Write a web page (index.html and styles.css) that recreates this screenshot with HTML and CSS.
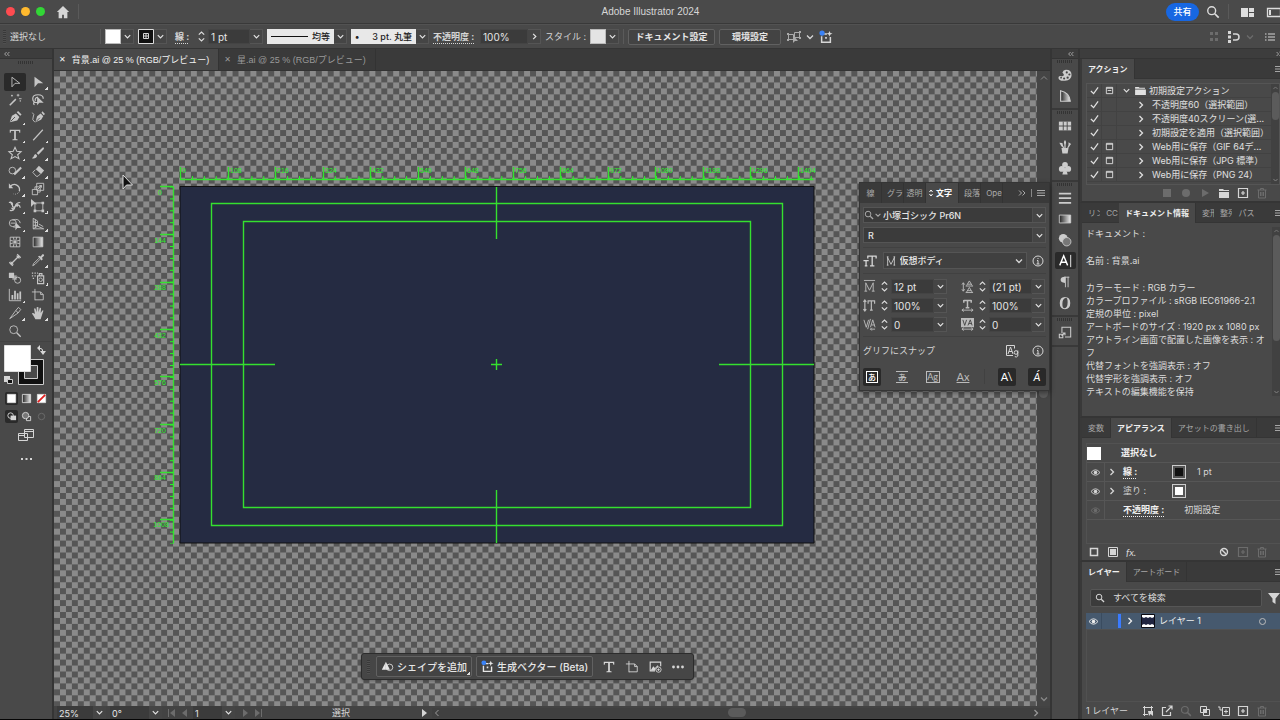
FILE: index.html
```html
<!DOCTYPE html>
<html lang="ja">
<head>
<meta charset="utf-8">
<title>Adobe Illustrator 2024</title>
<link rel="stylesheet" href="styles.css">
</head>
<body>
<svg class="sprite" aria-hidden="true">
  <symbol id="chev" viewBox="0 0 10 10"><path d="M2 3.5 5 6.5 8 3.5" stroke-width="1.3"/></symbol>
  <symbol id="right" viewBox="0 0 10 10"><path d="M3.5 2 6.5 5 3.5 8" stroke-width="1.3"/></symbol>
  <symbol id="left" viewBox="0 0 10 10"><path d="M6.5 2 3.5 5 6.5 8"/></symbol>
  <symbol id="up" viewBox="0 0 10 10"><path d="M2 6.5 5 3.5 8 6.5"/></symbol>
  <symbol id="dbl" viewBox="0 0 10 10"><path d="M4.5 2.5 2 5l2.5 2.5M8 2.5 5.5 5 8 7.5"/></symbol>
  <symbol id="dbr" viewBox="0 0 10 10"><path d="M2 2.5 4.5 5 2 7.5M5.5 2.5 8 5 5.5 7.5"/></symbol>
  <symbol id="menu" viewBox="0 0 10 10"><path d="M1 2.5h8M1 5h8M1 7.5h8"/></symbol>
  <symbol id="step" viewBox="0 0 10 14"><path d="M2 5 5 2l3 3M2 9l3 3 3-3" stroke-width="1.3"/></symbol>
  <symbol id="check" viewBox="0 0 10 10"><path d="M1 5.5 4 8.5 9 1.5" stroke-width="1.4"/></symbol>
  <symbol id="dialog" viewBox="0 0 10 10"><path d="M1.5 1.5h7v7h-7zM1.5 2.5h7"/></symbol>
  <symbol id="eye" viewBox="0 0 12 10"><path d="M1 5Q6-1 11 5 6 11 1 5z"/><circle cx="6" cy="5" r="2" class="f"/></symbol>
  <symbol id="trash" viewBox="0 0 12 12"><path d="M1.5 3h9M4.500 3V1.5h3V3M2.5 3v8h7V3M4.500 5v4M6 5v4M7.500 5v4"/></symbol>
  <symbol id="plus" viewBox="0 0 12 12"><path d="M1.5 1.5h9v9h-9zM6 4v4M4 6h4" stroke-width="1.2"/></symbol>
  <symbol id="info" viewBox="0 0 12 12"><circle cx="6" cy="6" r="5"/><path d="M5 5.5h1V9M4.500 9h3M5.500 3.5h1"/></symbol>
  <symbol id="search" viewBox="0 0 16 16"><circle cx="6.5" cy="6.5" r="4.5" stroke-width="1.6"/><path d="m10 10 4.5 4.5" stroke-width="2"/></symbol>
  <symbol id="gen" viewBox="0 0 16 16"><path d="M3 7v7h10V8M6 4.5h3" stroke-width="1.7"/><path class="f" d="M7 8h2v2H7zM12 1l1 2.5L15.500 4 13 5l-1 2.500L11 5 8.500 4 11 3.500z"/><circle cx="3.5" cy="3.5" r="3" class="blue"/></symbol>
  <symbol id="artb" viewBox="0 0 16 16"><path d="M4.500 1v13M1 4.500h5M6 4.500h5l3 3v6H4.500M11 4.500v3h3"/></symbol>
  <symbol id="bigT" viewBox="0 0 16 16"><path class="f" d="M2 2h12v3.500h-1L12.500 3.500H9v9l2 .5v1H5v-1l2-.5v-9H3.500L3 5.500H2z"/></symbol>
</svg>

<header class="titlebar">
  <div class="lights"><i class="red"></i><i class="yellow"></i><i class="green"></i></div>
  <button class="bare home" aria-label="ホーム"><svg viewBox="0 0 16 16"><path class="f" d="M8 1 1 8h2v7h4v-4h2v4h4V8h2z"/></svg></button>
  <i class="vsep"></i>
  <h1>Adobe Illustrator 2024</h1>
  <div class="title-right">
    <button class="share">共有</button>
    <button class="bare i14" aria-label="検索"><svg><use href="#search"/></svg></button>
    <i class="vsep"></i>
    <button class="bare i14" aria-label="ワークスペース"><svg viewBox="0 0 14 14"><path class="f" d="M1 3h7v9H1zM9 3h5v4H9zM9 8h5v4H9z"/></svg></button>
    <button class="bare i14 last" aria-label="パネル"><svg viewBox="0 0 14 14"><path d="M1.5 3.5h13v8h-13z" stroke-width="1.3"/><path class="f" d="M3 5h2v5H3z"/></svg></button>
  </div>
</header>

<div class="controlbar">
  <i class="grip-v"></i>
  <span class="selname">選択なし</span>
  <i class="vsep"></i>
  <span class="field"><button class="sw white" aria-label="塗り"></button><button class="dd" aria-label="塗りの一覧"><svg><use href="#chev"/></svg></button></span>
  <span class="field"><button class="sw strokesw" aria-label="線の色"><svg viewBox="0 0 16 15"><path class="well" d="M.5.5h15v14H.5z"/><path d="M5.500 4.500h5v5h-5zM8 5v4M6 7h4"/></svg></button><button class="dd" aria-label="線の一覧"><svg><use href="#chev"/></svg></button></span>
  <label class="dotted wlabel" for="sw">線 :</label>
  <span class="field"><button class="stepper" aria-label="増減"><svg><use href="#step"/></svg></button><input id="sw" class="w42" value="1 pt"><button class="dd" aria-label="線幅"><svg><use href="#chev"/></svg></button></span>
  <span class="field"><button class="preview w67"><i class="rule"></i>均等</button><button class="dd" aria-label="プロファイル"><svg><use href="#chev"/></svg></button></span>
  <span class="field"><button class="preview w65"><b>•</b>3 pt. 丸筆</button><button class="dd" aria-label="ブラシ"><svg><use href="#chev"/></svg></button></span>
  <label class="dotted bold" for="op">不透明度 :</label>
  <span class="field"><input id="op" class="w47" value="100%"><button class="dd" aria-label="不透明度"><svg><use href="#right"/></svg></button></span>
  <span class="stylelabel">スタイル :</span>
  <span class="field"><button class="sw light" aria-label="スタイル"></button><button class="dd" aria-label="スタイルの一覧"><svg><use href="#chev"/></svg></button></span>
  <i class="vsep"></i>
  <button class="btn w86">ドキュメント設定</button>
  <button class="btn w62">環境設定</button>
  <button class="bare i14 selsim" aria-label="類似を選択"><svg viewBox="0 0 14 14"><path d="M1.5 4.500h5v5h-5zM7.500 2.500h5v5h-5z"/><path class="f" d="M0 3h2v2H0zM0 9h2v2H0zM12 1h2v2h-2zM12 7h2v2h-2zM6 5v8l2-2h3z"/></svg></button>
  <button class="bare i10" aria-label="選択メニュー"><svg><use href="#chev"/></svg></button>
  <button class="bare i14" aria-label="生成"><svg><use href="#gen"/></svg></button>
  <div class="cb-right">
    <button class="bare i14 dim" aria-label="整列"><svg viewBox="0 0 14 14"><path class="f" d="M3 2h3v3H3zM8 2h3v3H8zM3 8h3v3H3zM8 8h3v3H8z"/></svg></button>
    <button class="bare i14" aria-label="スナップ"><svg viewBox="0 0 14 14"><path class="f" d="M2 1h3v3H2zM2 5.500h3v3H2zM2 10h3v3H2z"/><path d="M7 4h3q3 0 3 3t-3 3H7" stroke-width="1.5"/></svg></button>
    <button class="bare i10 dim" aria-label="スナップの一覧"><svg><use href="#chev"/></svg></button>
    <button class="bare i14 list" aria-label="一覧"><svg viewBox="0 0 14 14"><path d="M5 4h7M5 7h7M5 10h7M2 4h1.500M2 7h1.500M2 10h1.500" stroke-width="1.2"/></svg></button>
  </div>
</div>

<main class="workspace">
  <aside class="toolbox">
    <div class="strip"><svg class="i8"><use href="#dbl"/></svg></div>
    <i class="grip"></i>
    <div class="tools">
      <button class="on" aria-label="選択"><svg viewBox="0 0 16 16"><path d="M4.500 2.500v11l3.500-4h5.500z"/></svg></button>
      <button class="more" aria-label="ダイレクト選択"><svg viewBox="0 0 16 16"><path class="f" d="M4 2v12l4-4.500h6z"/></svg></button>
      <button aria-label="自動選択"><svg viewBox="0 0 16 16"><path d="m2 14 7-7" stroke-width="1.7"/><path d="M11.500 1v3M4.500 2v2M14 8v2M3.500 3h2M10 2.500h3M12.500 6.500h3"/></svg></button>
      <button aria-label="なげなわ"><svg viewBox="0 0 16 16"><path d="M8 11Q2 11 2 6.500T8 2t6 4.500M4 10q-2 2 0 3.500M5 9q-1-4 3-4" stroke-width="1.4"/><path class="f" d="M7 4v10l2.500-3h5z"/></svg></button>
      <button class="more" aria-label="ペン"><svg viewBox="0 0 16 16"><path class="f" d="M2 14 4.500 6.500 9 4l4 4-2.500 4zM10 2.500 11.500 1 15.500 5 14 6.500z"/><path class="ink" d="m3 13 5-5"/></svg></button>
      <button aria-label="曲線"><svg viewBox="0 0 16 16"><path class="f" d="M5 14 7 7l4-3 3 3-2.500 4zM12 3l1-1.500 3 3L14.500 6z"/><path class="ink" d="m6 13 4-4"/><path d="M1.500 3q3 2 1 5t2 6"/></svg></button>
      <button class="more" aria-label="文字"><svg><use href="#bigT"/></svg></button>
      <button class="more" aria-label="直線"><svg viewBox="0 0 16 16"><path d="m2.500 14 11-12" stroke-width="1.3"/></svg></button>
      <button class="more" aria-label="スター"><svg viewBox="0 0 16 16"><path d="m8 1.500 2 4.500 5 .5-4 3.500 1.500 4.500L8 12l-4.500 2.500L5 10 1 6.500 6 6z" stroke-width="1.2"/></svg></button>
      <button class="more" aria-label="ブラシ"><svg viewBox="0 0 16 16"><path class="f" d="M14 1 6.500 8l2 2L15 3zM5.500 9q-2 0-2.500 3-1 1.500-2 2 5 1 6-3z"/></svg></button>
      <button class="more" aria-label="Shaper"><svg viewBox="0 0 16 16"><circle cx="5" cy="7.5" r="3.8"/><path d="m7 12 8-8" stroke-width="2.4"/></svg></button>
      <button class="more" aria-label="消しゴム"><svg viewBox="0 0 16 16"><path class="f" d="m9 2 6 5.500-3.500 4-6-5.500z"/><path d="M5 6.500 2 9.500l4 4.500h2l3-3"/></svg></button>
      <button class="more" aria-label="回転"><svg viewBox="0 0 16 16"><path d="M2.500 5Q6 1.500 10 3.500t3 7" stroke-width="1.5"/><path d="M13 11q-3 4-7 2.500" stroke-dasharray="1 1.5"/><path class="f" d="M1 1.500V7h5z"/></svg></button>
      <button class="more" aria-label="拡大・縮小"><svg viewBox="0 0 16 16"><path d="M6.500 1.500h8v8h-8zM1.500 8.500h6v6h-6zM4.500 8V5.500h6v6H8M8 8l4-4M9.500 4H12v2.500"/></svg></button>
      <button class="more" aria-label="線幅"><svg viewBox="0 0 16 16"><path d="M1 4q4-1 4 3t4 1 5 2M2 13q5 1 6-4t6-5" stroke-width="1.4"/><path class="f" d="M2 3q3-1 4 3l-2 1zM8 7l4-2-1 4zM3 10h4l-1 3z"/></svg></button>
      <button class="more" aria-label="自由変形"><svg viewBox="0 0 16 16"><path d="M4.500 4.500h9v9h-9z"/><path class="f" d="M0 0v9l3-3h4zM12 3h3v3h-3zM3 12h3v3H3zM12 12h3v3h-3z"/></svg></button>
      <button class="more" aria-label="シェイプ形成"><svg viewBox="0 0 16 16"><circle cx="5.500" cy="7" r="4"/><path d="M5 3.500Q13 1 14 7M6 11.500h3M3 7h5"/><path class="f" d="M8.500 6v9l2-2.500H15z"/></svg></button>
      <button class="more" aria-label="遠近グリッド"><svg viewBox="0 0 16 16"><path d="M2.500 1.500v12h12M2.500 1.500l5 3v6l-5 3M5 3v9M2.500 5.500l5 1M2.500 9.500h5M7.500 10.500l7 3M9 8l5 3"/></svg></button>
      <button aria-label="メッシュ"><svg viewBox="0 0 16 16"><path d="M2.500 2.500h11v11h-11zM2.500 6q5 3 11 0M2.500 10q5-3 11 0M6 2.500q3 5 0 11M10 2.500q-3 5 0 11"/></svg></button>
      <button aria-label="グラデーション"><svg viewBox="0 0 16 16"><defs><linearGradient id="g1"><stop stop-color="#222"/><stop offset="1" stop-color="#eee"/></linearGradient></defs><path d="M2.500 2.500h11v11h-11z" fill="url(#g1)"/></svg></button>
      <button aria-label="寸法"><svg viewBox="0 0 16 16"><path d="m4 12 8-8M1.500 10.500l4 4M10.500 1.500l4 4" stroke-width="1.5"/><path class="f" d="M3 9v4h4zM9 3h4v4z"/></svg></button>
      <button class="more" aria-label="スポイト"><svg viewBox="0 0 16 16"><path d="m9 6-6 6-1 2.500L4.500 13l6-6"/><path class="f" d="m8 4 1.500-1L11 4l2-2.500q2-.5 2 1.500L12.500 5.500 13.500 7 12 8.500z"/></svg></button>
      <button aria-label="ブレンド"><svg viewBox="0 0 16 16"><path class="f" d="M1 2h6v6H1z"/><path class="f" opacity=".7" d="M5 5h5v5H5z"/><circle cx="11" cy="10.500" r="3.500"/></svg></button>
      <button class="more" aria-label="シンボルスプレー"><svg viewBox="0 0 16 16"><path d="M7.500 5.500h7v9h-7zM9.500 5V3h3v2" stroke-width="1.3"/><circle cx="11" cy="10" r="2"/><path d="M1 2.500h7M1 5.500h5M2 8.500h3" stroke-dasharray="1.5 1.5" stroke-width="1.5"/></svg></button>
      <button class="more" aria-label="グラフ"><svg viewBox="0 0 16 16"><path d="M1.500 1v13.500H15"/><path class="f" d="M4 8h2v5H4zM7 3h2v10H7zM10 6h2v7h-2zM13 4h2v9h-2z"/></svg></button>
      <button aria-label="アートボード"><svg><use href="#artb"/></svg></button>
      <button class="more" aria-label="スライス"><svg viewBox="0 0 16 16"><path d="M2 14.500 9 5l2.500 3zM9 5l3-3.500L14.500 4l-3 4"/></svg></button>
      <button class="more" aria-label="手のひら"><svg viewBox="0 0 16 16"><path class="f" d="M5 15Q3 11 1 8.500q1-1.500 3.500.5L3.500 3q1.500-1 2 1l1 3V1.500q1.500-1 2 0V7l1.500-5q1.500-.5 1.500 1L11 8l2-3q1.500-.5 1 1l-2 6-1 3z"/></svg></button>
      <button aria-label="ズーム"><svg viewBox="0 0 16 16"><circle cx="6.500" cy="6.500" r="4.500"/><path d="m10 10 4.500 4.500" stroke-width="1.5"/></svg></button>
    </div>
    <div class="colors">
      <svg viewBox="0 0 52 46"><path class="black" d="M18.500 17.500h25v25h-25z"/><path d="M24.500 23.500h13v13h-13z" class="hollow"/><path class="white-f" d="M4.500 3.500h26v26h-26z"/><path d="M39 6q4 0 4 4"/><path class="f" d="M40 3v6l-3-3zM40 9h6l-3 4z"/><path class="f" d="M4 34h6v6H4z"/><path class="black" d="M7.500 37.500h5v4h-5z"/></svg>
    </div>
    <div class="modes">
      <button class="on" aria-label="カラー"><svg viewBox="0 0 12 12"><path class="white-f" d="M1.500 1.500h9v9h-9z"/></svg></button>
      <button aria-label="グラデーション"><svg viewBox="0 0 12 12"><path d="M1.500 1.500h9v9h-9z" fill="url(#g1)"/></svg></button>
      <button aria-label="なし"><svg viewBox="0 0 12 12"><path class="white-f" d="M1.500 1.500h9v9h-9z"/><path class="redline" d="m2 10 8-8"/></svg></button>
    </div>
    <div class="modes">
      <button class="on" aria-label="標準描画"><svg viewBox="0 0 12 12"><circle cx="5" cy="5" r="3"/><path class="f" d="M5 5h6v5H5z"/></svg></button>
      <button aria-label="背面描画"><svg viewBox="0 0 12 12"><path d="M6 6h4.500v4.500H6z"/><circle cx="5" cy="5" r="3.500" class="fillgray"/></svg></button>
      <button class="dim" aria-label="内側描画"><svg viewBox="0 0 12 12"><circle cx="6" cy="6" r="3.500"/></svg></button>
    </div>
    <button class="bare screen" aria-label="スクリーンモード"><svg viewBox="0 0 18 14"><path class="pan" d="M1.500 5.500h9v7h-9zM7.500 1.500h9v8h-9zM2 7.500h5M8 3.500h8"/></svg></button>
    <button class="bare dots" aria-label="ツールバーを編集"><svg viewBox="0 0 12 4"><path class="f" d="M0 1h2v2H0zM4.500 1h2v2h-2zM9 1h2v2H9z"/></svg></button>
  </aside>

  <section class="doc">
    <nav class="doctabs">
      <button class="doctab on"><span>✕</span>背景.ai @ 25 % (RGB/プレビュー)</button>
      <button class="doctab"><span>✕</span>星.ai @ 25 % (RGB/プレビュー)</button>
    </nav>
    <div class="view">
      <svg class="art" role="img" aria-label="背景.ai">
        <defs>
          <pattern id="checker" width="11.9" height="11.9" patternUnits="userSpaceOnUse" x="6" y="5.5">
            <path class="ck-light" d="M0 0h12v12H0z"/><path class="ck-dark" d="M0 0h5.950v5.950H0zM5.950 5.950h5.950v5.950H5.950z"/>
          </pattern>
          <pattern id="tickh" width="11.9" height="4" patternUnits="userSpaceOnUse" x="126" y="105"><path class="gf" d="M0 0h1v4H0z"/></pattern>
          <pattern id="tickv" width="4" height="11.9" patternUnits="userSpaceOnUse" x="116" y="115.5"><path class="gf" d="M0 0h4v1H0z"/></pattern>
        </defs>
        <rect width="100%" height="100%" fill="url(#checker)"/>
        <g transform="translate(-54 -71)">
          <path class="board" d="M180 186.500h634V543H180z"/>
          <path class="guide" d="M211.500 203.500h571v322h-571zM243.500 221.500h507v286h-507zM496.500 187v52M496.500 490v53M180 364.500h95M719 364.500h95M491 364.500h11M496.500 359v11"/>
          <path class="guide" d="M180.500 179.500h633M173.500 187v356M180.500 179V167M228.500 179V167M275.500 179V167M323.500 179V167M370.500 179V167M418.500 179V167M465.500 179V167M513.500 179V167M560.500 179V167M608.500 179V167M655.500 179V167M703.500 179V167M750.500 179V167M798.500 179V167M160 186.500h13M160 234.500h13M160 282.500h13M160 329.500h13M160 376.500h13M160 424.500h13M160 472.500h13M160 519.500h13"/>
          <g class="rul">
            <text x="182" y="173">0</text><text x="230" y="173">108</text><text x="277" y="173">216</text><text x="325" y="173">324</text><text x="372" y="173">432</text><text x="420" y="173">540</text><text x="467" y="173">648</text><text x="515" y="173">756</text><text x="562" y="173">864</text><text x="610" y="173">972</text><text x="657" y="173">1080</text><text x="705" y="173">1188</text><text x="752" y="173">1296</text><text x="800" y="173">1404</text>
          </g>
          <g class="rul mid">
            <text x="160" y="195">0</text><text x="160" y="243">144</text><text x="160" y="290">288</text><text x="160" y="338">432</text><text x="160" y="385">576</text><text x="160" y="433">720</text><text x="160" y="480">864</text><text x="161" y="527">1008</text>
          </g>
          <path class="pointer" d="M123 175v14l3.500-4h6z"/>
        </g>
        <rect x="126" y="105" width="634" height="4" fill="url(#tickh)"/>
        <rect x="116" y="115" width="4" height="358" fill="url(#tickv)"/>
      </svg>
      <div class="vscroll"><svg class="i10"><use href="#up"/></svg><i></i><svg class="i10"><use href="#chev"/></svg></div>

      <div class="taskbar">
        <i class="grip-v"></i>
        <button class="btn task more"><svg viewBox="0 0 16 16"><path class="f" d="M6 2v10H1z"/><path class="f" d="m6 2 5 10H6z"/><circle cx="10.500" cy="9" r="4"/></svg>シェイプを追加</button>
        <button class="btn task"><svg><use href="#gen"/></svg>生成ベクター (Beta)</button>
        <button class="bare i14 first" aria-label="文字"><svg><use href="#bigT"/></svg></button>
        <button class="bare i14" aria-label="アートボード"><svg><use href="#artb"/></svg></button>
        <button class="bare i14" aria-label="画像"><svg viewBox="0 0 16 16"><path d="M14.500 7V2.500h-12v10H8" stroke-width="1.3"/><path class="f" d="M3 12 6 7l2 2 3-3 1 1-3 2-1 3z"/><circle cx="12" cy="11" r="3"/><path d="M12 9.500v3M10.500 11h3"/></svg></button>
        <button class="bare i14" aria-label="その他"><svg viewBox="0 0 14 14"><circle class="f" cx="2.500" cy="7" r="1.400"/><circle class="f" cx="7" cy="7" r="1.400"/><circle class="f" cx="11.500" cy="7" r="1.400"/></svg></button>
      </div>

      <section class="charpanel">
        <nav class="cp-tabs">
          <button class="t20 first">線</button><button class="t20 pl">グラ</button><button class="t20">透明</button><button class="on"><svg viewBox="0 0 6 10"><path d="M1.500 4 3 2l1.500 2M1.500 6 3 8l1.500-2"/></svg>文字</button><button class="t20 pl">段落</button><button class="t20 pl">Ope</button>
          <span class="cp-menu"><svg class="i10"><use href="#dbr"/></svg><i class="vsep"></i><svg class="i10"><use href="#menu"/></svg></span>
        </nav>
        <div class="cp-body">
          <div class="field wide"><span class="lead"><svg class="i10" viewBox="0 0 16 16"><use href="#search"/></svg><svg class="i8"><use href="#chev"/></svg></span><input aria-label="フォント" value="小塚ゴシック Pr6N"><button class="dd" aria-label="フォントの一覧"><svg><use href="#chev"/></svg></button></div>
          <div class="field wide"><input class="pad" aria-label="スタイル" value="R"><button class="dd" aria-label="スタイルの一覧"><svg><use href="#chev"/></svg></button></div>
          <hr>
          <div class="bodyrow"><svg class="i14" viewBox="0 0 16 16"><path d="M5 2.500h10.500M10.500 2.500V14M8 13.500h5M5.500 2v3M15 2v3M.5 7.500h6M3.500 7.500V14M2 13.500h3" stroke-width="1.5"/></svg>
            <span class="selwrap"><svg class="i10" viewBox="0 0 12 12"><path d="M2 1v10M10 1v10M2 2l4 8 4-8M1 1h2M9 1h2M1 11h2M9 11h2"/></svg><select aria-label="文字揃え"><option>仮想ボディ</option></select><svg class="i10"><use href="#chev"/></svg></span>
            <svg class="i12"><use href="#info"/></svg></div>
          <hr>
          <div class="metrics">
            <label class="field"><svg class="mi" viewBox="0 0 14 14"><path d="M1 .5h12M3 3v9M11 3v9M3 3l4 8 4-8M1.500 12h3M9.500 12h3"/></svg><span class="stepper"><svg><use href="#step"/></svg></span><input value="12 pt"><button class="dd" aria-label="サイズ"><svg><use href="#chev"/></svg></button></label>
            <label class="field"><svg class="mi" viewBox="0 0 14 14"><path d="M2.500 3v9M1 5l1.500-2L4 5M1 10l1.500 2L4 10M6 6l3-5 3 5M7 4.500h4M6 13l3-5 3 5M7 11.500h4M5 6.500h8M5 13.500h8"/></svg><span class="stepper"><svg><use href="#step"/></svg></span><input value="(21 pt)"><button class="dd" aria-label="行送り"><svg><use href="#chev"/></svg></button></label>
            <label class="field"><svg class="mi" viewBox="0 0 14 14"><path d="M2 1v12M.5 3 2 1l1.500 2M.5 11 2 13l1.500-2M5 2h8M9 2v10M7.500 12h3M5.500 1.500V5M12.500 1.500V5" stroke-width="1.3"/></svg><span class="stepper"><svg><use href="#step"/></svg></span><input value="100%"><button class="dd" aria-label="垂直比率"><svg><use href="#chev"/></svg></button></label>
            <label class="field"><svg class="mi" viewBox="0 0 14 14"><path d="M3 1.500h8M7 1.500v8M5 9.500h4M3 1v3M11 1v3" stroke-width="1.6"/><path d="M1 12h12M3 10.500 1 12l2 1.500M11 10.500l2 1.500-2 1.500"/></svg><span class="stepper"><svg><use href="#step"/></svg></span><input value="100%"><button class="dd" aria-label="水平比率"><svg><use href="#chev"/></svg></button></label>
            <label class="field"><svg class="mi" viewBox="0 0 14 14"><path d="m1 2 2.500 8L6 2M8 10l2.500-8L13 10M9 7.500h3.500M8 1 5 12M8 12h5M9.500 10.500 8 12l1.500 1.500"/></svg><span class="stepper"><svg><use href="#step"/></svg></span><input value="0"><button class="dd" aria-label="カーニング"><svg><use href="#chev"/></svg></button></label>
            <label class="field"><svg class="mi" viewBox="0 0 14 14"><path class="f" d="M0 0h14v10H0z"/><path class="ink" d="m2 2 2 6 2-6M7.500 8 10 2l2 6M8.500 6h3"/><path d="M1 12h12M3 10.500 1 12l2 1.500M11 10.500l2 1.500-2 1.500"/></svg><span class="stepper"><svg><use href="#step"/></svg></span><input value="0"><button class="dd" aria-label="トラッキング"><svg><use href="#chev"/></svg></button></label>
          </div>
          <hr>
          <div class="snap"><span>グリフにスナップ</span><svg class="i14" viewBox="0 0 14 14"><path d="M8 11.500H1.500v-10h8v3M3 10l2.500-7L8 10M4 7.500h3"/><circle cx="11" cy="8.500" r="1.800"/><path d="M12.800 6.500V12q-1 1.500-3 .7"/></svg><svg class="i12"><use href="#info"/></svg></div>
          <div class="snaps">
            <button class="on"><b>あ</b></button><button><b class="mid-line">あ</b></button><button><b class="big">Ag</b></button><button><u>Ax</u></button><i class="vsep"></i><button class="on">A\</button><button class="on"><em>Á</em></button>
          </div>
        </div>
      </section>
    </div>
    <footer class="status">
      <span class="field z"><input aria-label="ズーム" value="25%"><button class="dd" aria-label="ズームの一覧"><svg><use href="#chev"/></svg></button></span>
      <span class="field z r"><input aria-label="回転" value="0°"><button class="dd" aria-label="回転の一覧"><svg><use href="#chev"/></svg></button></span>
      <svg class="i10 dim" viewBox="0 0 10 10"><path class="f" d="M1 1h1v8H1zM8 1v8L3 5z"/></svg><svg class="i10 dim" viewBox="0 0 10 10"><path class="f" d="M7 1v8L2 5z"/></svg>
      <span class="field z n"><input aria-label="アートボード" value="1"><button class="dd" aria-label="アートボードの一覧"><svg><use href="#chev"/></svg></button></span>
      <svg class="i10 dim" viewBox="0 0 10 10"><path class="f" d="M3 1v8l5-4z"/></svg><svg class="i10 dim" viewBox="0 0 10 10"><path class="f" d="M8 1h1v8H8zM2 1v8l5-4z"/></svg>
      <span class="toolname">選択</span>
      <svg class="i10" viewBox="0 0 10 10"><path class="f" d="M3 1v8l5-4z"/></svg>
      <div class="hscroll"><svg class="i10"><use href="#left"/></svg><i></i><svg class="i10"><use href="#right"/></svg></div>
    </footer>
  </section>

  <aside class="icondock">
    <div class="strip end"><svg class="i8"><use href="#dbl"/></svg></div>
    <div class="group">
      <i class="grip"></i>
      <button aria-label="カラー"><svg viewBox="0 0 16 16"><path class="f" d="M9 2q6.500 0 6.500 6T8 14.500.5 11q0-2 2-2 3 1 4-.5T5 5q1-3 4-3z"/><g class="holes"><circle cx="10" cy="5" r="1.200"/><circle cx="13" cy="7.500" r="1.200"/><circle cx="11" cy="11" r="1.300"/><circle cx="7" cy="12" r="1.200"/><circle cx="3.500" cy="11" r="1"/></g></svg></button>
      <button aria-label="カラーガイド"><svg viewBox="0 0 16 16"><path d="M3 2q10 2 11 12H3z" fill="url(#g1)" stroke-width="1.4"/></svg></button>
    </div>
    <div class="group">
      <i class="grip"></i>
      <button aria-label="スウォッチ"><svg viewBox="0 0 16 16"><path class="f" d="M1 3h14v10H1z"/><path class="ink" d="M1 8h14M6 3v10M10.500 3v10"/></svg></button>
      <button aria-label="ブラシ"><svg viewBox="0 0 16 16"><path class="f" d="M4 9h8l-1 6.500H5zM1.500 3l3.500.5 1 4H4zM8 0q2.500 3 0 5.500-2.500-2.500 0-5.500zM12 2.500l3 2-3 3.500z"/><path d="M8 4v5M4.500 6l2 3M13 6l-2 3" stroke-width="1.4"/></svg></button>
      <button aria-label="シンボル"><svg viewBox="0 0 16 16"><circle class="f" cx="8" cy="4.500" r="3.300"/><circle class="f" cx="4.300" cy="9" r="3.300"/><circle class="f" cx="11.700" cy="9" r="3.300"/><path class="f" d="M7 8h2l2 7.500H5z"/></svg></button>
    </div>
    <div class="group">
      <i class="grip"></i>
      <button aria-label="線"><svg viewBox="0 0 16 16"><path d="M1 3h14M1 8h14M1 13.500h14" stroke-width="2"/></svg></button>
      <button aria-label="グラデーション"><svg viewBox="0 0 16 16"><path d="M1.500 3.500h13v9h-13z" fill="url(#g1)"/></svg></button>
      <button aria-label="透明"><svg viewBox="0 0 16 16"><circle class="f" cx="6" cy="6" r="5"/><circle class="fillgray" cx="10" cy="10" r="4.800"/></svg></button>
      <button class="on" aria-label="文字"><svg viewBox="0 0 16 16"><path d="m2 13 4.500-11L11 13M3.500 9.500h6" stroke-width="1.6"/><path d="M14.500 1v14"/></svg></button>
      <button aria-label="段落"><svg viewBox="0 0 16 16"><path class="f" d="M8 2Q3 2 3 5.500T8 9z"/><path d="M7 2.500h6M8.500 2v12M11.500 2v12"/></svg></button>
      <button aria-label="OpenType"><svg viewBox="0 0 16 16"><path class="f" fill-rule="evenodd" d="M8 1q6 0 6 7t-6 7-6-7 6-7zm1 1Q5 3 5 9q0 5 2.500 5Q11 13 11 7q0-5-2-5z"/></svg></button>
    </div>
    <div class="group">
      <i class="grip"></i>
      <button aria-label="アセット"><svg viewBox="0 0 16 16"><path d="M4.500 8V1.500h10v11H8M1.500 9.500h4v4h-4zM4 11l4-3M5.500 8H8v2.500" stroke-width="1.200"/></svg></button>
    </div>
    <i class="rest"></i>
  </aside>

  <aside class="panels">
    <div class="strip end"><svg class="i8"><use href="#dbr"/></svg></div>
    <section class="panel actions">
      <nav class="tabs"><button class="on">アクション</button><svg class="pmenu"><use href="#menu"/></svg></nav>
      <div class="p-body">
        <div class="act-wrap"><ul class="act">
          <li><span><svg><use href="#check"/></svg></span><span><svg viewBox="0 0 10 10"><use href="#dialog"/><path d="M3 5h4"/></svg></span><span class="tw"><svg><use href="#chev"/></svg></span><svg class="folder" viewBox="0 0 12 10"><path class="f" d="M0 1h4l1 1h6v1H0zM0 4h12v6H0z"/></svg>初期設定アクション</li>
          <li class="sub"><span><svg><use href="#check"/></svg></span><span></span><span class="tw"><svg><use href="#right"/></svg></span>不透明度60（選択範囲）</li>
          <li class="sub"><span><svg><use href="#check"/></svg></span><span></span><span class="tw"><svg><use href="#right"/></svg></span>不透明度40スクリーン(選...</li>
          <li class="sub"><span><svg><use href="#check"/></svg></span><span></span><span class="tw"><svg><use href="#right"/></svg></span>初期設定を適用（選択範囲）</li>
          <li class="sub"><span><svg><use href="#check"/></svg></span><span><svg><use href="#dialog"/></svg></span><span class="tw"><svg><use href="#right"/></svg></span>Web用に保存（GIF 64デ...</li>
          <li class="sub"><span><svg><use href="#check"/></svg></span><span><svg><use href="#dialog"/></svg></span><span class="tw"><svg><use href="#right"/></svg></span>Web用に保存（JPG 標準）</li>
          <li class="sub"><span><svg><use href="#check"/></svg></span><span><svg><use href="#dialog"/></svg></span><span class="tw"><svg><use href="#right"/></svg></span>Web用に保存（PNG 24）</li>
        </ul><div class="pscroll"><svg><use href="#up"/></svg><i></i><svg><use href="#chev"/></svg></div></div>
        <div class="foot right">
          <svg class="dim" viewBox="0 0 12 12"><path class="f" d="M2 2h8v8H2z"/></svg><svg class="dim" viewBox="0 0 12 12"><circle class="f" cx="6" cy="6" r="4"/></svg><svg class="dim" viewBox="0 0 12 12"><path class="f" d="M3 2v8l7-4z"/></svg><svg viewBox="0 0 12 12"><path class="f" d="M1 2h4l1 1h5v1H1zM1 5h10v6H1z"/></svg><svg><use href="#plus"/></svg><svg class="dim"><use href="#trash"/></svg>
        </div>
      </div>
    </section>
    <section class="panel docinfo">
      <nav class="tabs"><button class="cut">リン</button><button class="cut">CC</button><button class="on">ドキュメント情報</button><button class="cut">変形</button><button class="cut">整列</button><button class="cut wide2">パス</button><svg class="pmenu"><use href="#menu"/></svg></nav>
      <div class="p-body info-row">
        <div class="info">
          <p class="gap">ドキュメント :</p><p class="gap">名前 : 背景.ai</p>
          <p>カラーモード : RGB カラー</p><p>カラープロファイル : sRGB IEC61966-2.1</p><p>定規の単位 : pixel</p><p>アートボードのサイズ : 1920 px x 1080 px</p><p>アウトライン画面で配置した画像を表示 : オ<br>フ</p><p>代替フォントを強調表示 : オフ</p><p>代替字形を強調表示 : オフ</p><p>テキストの編集機能を保持</p>
        </div>
        <div class="pscroll tall"><svg><use href="#up"/></svg><i></i><svg><use href="#chev"/></svg></div>
      </div>
    </section>
    <section class="panel appear">
      <nav class="tabs"><button>変数</button><button class="on">アピアランス</button><button>アセットの書き出し</button><svg class="pmenu"><use href="#menu"/></svg></nav>
      <div class="p-body">
        <ul class="app">
          <li class="head"><i class="thumb"></i><b>選択なし</b></li>
          <li><span class="eye"><svg><use href="#eye"/></svg></span><svg class="i10"><use href="#right"/></svg><b class="dotted name">線 :</b><i class="chip dark"></i>1 pt</li>
          <li><span class="eye"><svg><use href="#eye"/></svg></span><svg class="i10"><use href="#right"/></svg><span class="name">塗り :</span><i class="chip"></i></li>
          <li><span class="eye dim"><svg><use href="#eye"/></svg></span><i class="i10"></i><b class="dotted">不透明度 :</b><span class="def">初期設定</span></li>
        </ul>
        <div class="foot"><svg viewBox="0 0 12 12"><path d="M2.500 2.500h7v7h-7z" stroke-width="1.5"/></svg><svg viewBox="0 0 12 12"><path d="M1.500 1.500h9v9h-9z"/><path class="f" d="M3 3h6v6H3z"/></svg><em>fx.</em><span class="push"></span><svg viewBox="0 0 12 12"><circle cx="6" cy="6" r="3.500" stroke-width="1.4"/><path d="m3.500 3.500 5 5" stroke-width="1.4"/></svg><svg class="dim"><use href="#plus"/></svg><svg class="dim"><use href="#trash"/></svg></div>
      </div>
    </section>
    <section class="panel layers">
      <nav class="tabs"><button class="on">レイヤー</button><button>アートボード</button><svg class="pmenu"><use href="#menu"/></svg></nav>
      <div class="p-body">
        <div class="lsearch"><label><svg class="i10" viewBox="0 0 16 16"><use href="#search"/></svg><input aria-label="検索" placeholder="すべてを検索"></label><svg class="i12" viewBox="0 0 12 12"><path class="f" d="M0 1h12L7.500 6.500V12l-3-2V6.500z"/></svg></div>
        <div class="lrow"><span class="eye"><svg><use href="#eye"/></svg></span><i class="bar"></i><svg class="i10"><use href="#right"/></svg><svg class="lthumb" viewBox="0 0 14 14"><path class="navy" d="M.5.5h13v13H.5z"/><path class="snow" d="M1 1h12v2l-2 1-2-1-2 1-2-1-2 1-2-1zM1 13h12v-2l-2-1-2 1-2-1-2 1-2-1-2 1z"/></svg><span>レイヤー 1</span><span class="target"></span></div>
        <div class="lempty"></div>
        <div class="foot"><span>1 レイヤー</span><span class="push"></span><svg viewBox="0 0 12 12"><path d="M2.500 1v10M9.500 1v5M1 2.500h10M1 9.500h5"/><path class="f" d="M6 6h5v5L8.500 9 7 11z"/></svg><svg viewBox="0 0 12 12"><path d="M5 2.500H1.500v8h8V7M5 7l6-6M7.500 1H11v3.500" stroke-width="1.2"/></svg><svg class="dim" viewBox="0 0 16 16"><use href="#search"/></svg><svg viewBox="0 0 12 12"><path d="M1.500 1.500h6v6h-6zM4.500 4.500h6v6h-6z"/><path class="f" d="M4 4h4v4H4z"/></svg><svg viewBox="0 0 12 12"><path d="M4.500 2.500h7v8h-7zM8 4.500v4M6 6.500h4M0 2h2v3h2"/></svg><svg><use href="#plus"/></svg><svg class="dim"><use href="#trash"/></svg></div>
      </div>
    </section>
  </aside>
</main>
</body>
</html>
```
FILE: styles.css
```css
* { box-sizing: border-box; }
html, body { height: 100%; }
body {
  margin: 0;
  display: flex;
  flex-direction: column;
  overflow: hidden;
  background: #494949;
  border-bottom: 1px solid #050505;
  color: #d6d6d6;
  font: 9px/12px Inter, "Noto Sans CJK JP", sans-serif;
}
button, input, select { font: inherit; color: inherit; margin: 0; padding: 0; border: 0; background: none; min-width: 0; }
button { white-space: nowrap; }
ul, p, h1 { margin: 0; padding: 0; list-style: none; }
hr { width: 100%; height: 1px; margin: 0; border: 0; background: #414141; }
i { font-style: normal; flex: none; }
svg { display: block; flex: none; fill: none; stroke: currentColor; overflow: visible; }
.sprite { position: absolute; width: 0; height: 0; }
.f { fill: currentColor; stroke: none; }
.ink { stroke: #444; }
.blue { fill: #3a82f6; stroke: none; }
.black { fill: #111; stroke: #ccc; }
.hollow { fill: #494949; stroke: #ccc; }
.white-f { fill: #fff; stroke: #ddd; }
.redline { stroke: #e02020; stroke-width: 2; }
.fillgray { fill: #777; }
.pan { fill: #494949; }
.navy { fill: #1f2440; stroke: #0c0c14; }
.snow { fill: #fff; stroke: none; }
.well { fill: #111; stroke: #ddd; }
.holes { fill: #444; stroke: none; }
.dim { color: #6c6c6c; }
.bare { display: flex; flex: none; }
.bare svg { width: 100%; height: 100%; }
.i8 { width: 8px; height: 8px; flex: none; }
.i10 { width: 10px; height: 10px; flex: none; }
.i12 { width: 12px; height: 12px; flex: none; }
.i14 { width: 14px; height: 14px; flex: none; }
.vsep { width: 1px; height: 15px; background: #5a5a5a; }

.titlebar {
  position: relative;
  flex: none;
  height: 24px;
  display: flex;
  align-items: center;
  padding-left: 6px;
  background: #4a4a4a;
  border-bottom: 1px solid #393939;
}
.lights { display: flex; gap: 6px; }
.lights i { width: 9px; height: 9px; border-radius: 50%; }
.red { background: #ff4b50; }
.yellow { background: #ffb92e; }
.green { background: #32d636; }
.home { width: 14px; height: 14px; margin: 0 8px 0 11px; }
.titlebar h1 { flex: 1; text-align: center; font: 400 10px/12px "Liberation Sans", sans-serif; padding-left: 78px; padding-right: 22px; }
.title-right { display: flex; align-items: center; gap: 7px; color: #ddd; overflow: hidden; }
.title-right .vsep { margin: 0 4px 0 1px; }
.share { width: 33px; height: 18px; border-radius: 9px; background: #1767e2; color: #fff; font-weight: 500; }
.last { margin-left: 5px; margin-right: 0; }

.controlbar {
  flex: none;
  height: 25px;
  display: flex;
  align-items: center;
  gap: 4px;
  padding-left: 3px;
  background: #494949;
  border-top: 1px solid #525252;
  border-bottom: 1px solid #353535;
}
.grip-v { width: 3px; height: 14px; background: repeating-linear-gradient(#393939 0 1px, #505050 1px 2px); }
.selname { width: 86px; }
.field { display: flex; flex: none; align-items: center; height: 15px; }
.field input { width: 42px; height: 15px; padding: 1px 2px 0; background: #3b3b3b; border: 1px solid #444; font-size: 10px; color: #e6e6e6; }
.dd { display: flex; align-items: center; justify-content: center; flex: none; width: 13px; height: 15px; border: 1px solid #555; border-left: 0; background: #454545; color: #e4e4e4; }
.dd svg { width: 9px; height: 9px; }
.sw { width: 16px; height: 15px; border: 1px solid #bbb; }
.white { background: #fff; }
.light { background: #e4e4e4; }
.strokesw { border: 0; }
.strokesw svg { width: 16px; height: 15px; }
.stepper { display: flex; justify-content: center; align-items: center; width: 13px; height: 15px; color: #ddd; }
.stepper svg { width: 9px; height: 13px; }
.dotted { text-decoration: underline dotted 1px; text-underline-offset: 3px; }
.wlabel { margin-left: 4px; width: 16px; font-weight: 700; }
.bold { font-weight: 700; width: 43px; white-space: nowrap; }
.stylelabel { width: 41px; white-space: nowrap; }
.field .w47 { width: 48px; }
.preview { display: flex; align-items: center; justify-content: space-between; height: 15px; padding: 0 4px; background: #e8e8e8; color: #222; font-weight: 500; }
.w67 { width: 67px; }
.w65 { width: 65px; }
.rule { width: 37px; height: 1px; background: #111; }
.btn { height: 16px; border: 1px solid #616161; border-radius: 2px; background: #434343; font-weight: 600; color: #e6e6e6; flex: none; }
.w86 { width: 87px; }
.w62 { width: 62px; }
.selsim { margin-left: 2px; color: #aaa; }
.cb-right { margin-left: auto; display: flex; align-items: center; gap: 5px; padding-right: 3px; }
.list { margin-left: 3px; }

.workspace { flex: 1; min-height: 0; display: flex; }
.strip { height: 10px; flex: none; padding-left: 3px; display: flex; align-items: center; background: #3d3d3d; border-bottom: 1px solid #343434; color: #bbb; }
.end { justify-content: flex-end; padding-right: 3px; }
.grip { display: block; width: 16px; height: 3px; margin: 2px auto; background: repeating-linear-gradient(90deg, #333 0 1px, #4a4a4a 1px 2px); }

.toolbox { flex: none; width: 54px; border-right: 2px solid #353535; background: #494949; display: flex; flex-direction: column; }
.tools { display: grid; grid-template-columns: 22px 22px; column-gap: 1px; grid-auto-rows: 1fr; height: 267px; margin-top: 7px; padding-left: 4px; color: #c6c6c6; }
.tools button { position: relative; display: flex; align-items: center; justify-content: center; }
.tools svg { width: 14px; height: 14px; }
.tools .on, .modes .on { background: #2a2a2a; border-radius: 2px; }
.more::after { content: ""; position: absolute; right: 1px; bottom: 1px; width: 3px; height: 3px; background: linear-gradient(135deg, transparent 50%, #ddd 50%); }
.colors { border-top: 1px solid #424242; margin-top: 1px; height: 48px; }
.colors svg { width: 52px; height: 46px; }
.modes { display: flex; gap: 2px; padding-left: 5px; height: 18px; align-items: center; }
.modes button { display: flex; align-items: center; justify-content: center; width: 13px; height: 13px; }
.modes svg { width: 11px; height: 11px; }
.screen { width: 18px; height: 14px; margin: 3px 0 0 17px; }
.dots { width: 12px; height: 4px; margin: 15px 0 0 21px; }

.doc { flex: 1; min-width: 0; display: flex; flex-direction: column; background: #3a3a3a; }
.doctabs { flex: none; height: 22px; display: flex; border-bottom: 1px solid #333; background: #3a3a3a; }
.doctab { display: flex; align-items: center; gap: 6px; padding: 0 9px 0 5px; border-right: 1px solid #333; color: #999; font-family: "Liberation Sans", "Noto Sans CJK JP", sans-serif; }
.doctab.on { background: #494949; color: #f2f2f2; }
.doctab span { font: 8px/12px "DejaVu Sans", sans-serif; }
.view { flex: 1; min-height: 0; position: relative; display: flex; }
.art { flex: 1; min-width: 0; height: 100%; overflow: hidden; stroke: none; }
.ck-light { fill: #8a8a8a; }
.ck-dark { fill: #565656; }
.board { fill: #252b42; stroke: #111; stroke-width: 1; }
.guide { fill: none; stroke: #35e02f; stroke-width: 1.4; }
.gf { fill: #2bf02b; }
.rul { fill: #2bf02b; font: 7px "Liberation Sans", sans-serif; }
.mid { text-anchor: middle; }
.pointer { fill: #111; stroke: #ddd; }
.vscroll { flex: none; width: 13px; display: flex; flex-direction: column; align-items: center; justify-content: space-between; padding: 2px 0; background: #454545; color: #888; }
.vscroll i { width: 9px; height: 24px; border-radius: 5px; background: #5b5b5b; margin-bottom: 6px; }

.taskbar { position: absolute; left: 307px; bottom: 26px; height: 27px; display: flex; align-items: center; gap: 9px; padding: 0 8px 0 5px; background: #464646; border: 1px solid #2c2c2c; border-radius: 3px; color: #d6d6d6; box-shadow: 0 1px 3px #2225; }
.taskbar .grip-v { margin-right: -3px; }
.task { position: relative; display: flex; align-items: center; gap: 3px; height: 21px; padding: 0 4px; font-size: 10px; font-weight: 500; margin-right: -5px; }
.task svg { width: 13px; height: 13px; }
.taskbar .first { margin-left: 5px; }

.charpanel { position: absolute; right: 0; top: 111px; width: 191px; background: #494949; border: 1px solid #353535; box-shadow: 0 2px 5px #0006; }
.cp-tabs { display: flex; height: 20px; background: #3a3a3a; color: #aaa; font-size: 8px; }
.cp-tabs button { overflow: hidden; border-right: 1px solid #333; }
.cp-tabs .on { display: flex; align-items: center; gap: 2px; padding: 0 6px 0 2px; background: #494949; color: #fff; font-weight: 700; font-size: 8px; }
.cp-tabs .on svg { width: 6px; height: 10px; }
.t20 { width: 22px; }
.t20.pl { width: 22px; padding-left: 5px; }
.cp-menu { flex: 1; display: flex; justify-content: flex-end; align-items: center; gap: 4px; padding-right: 3px; }
.cp-menu .vsep { height: 8px; background: #888; }
.cp-body { display: flex; flex-direction: column; gap: 4px; padding: 4px 3px 1px; }
.wide { background: #3b3b3b; border: 1px solid #555; height: 16px; }
.wide input { flex: 1; border: 0; height: 14px; background: none; font-size: 9px; font-weight: 500; }
.wide .dd { height: 14px; border: 0; border-left: 1px solid #4e4e4e; }
.wide .pad { padding-left: 4px; }
.lead { display: flex; align-items: center; width: 17px; color: #aaa; }
.bodyrow { display: flex; align-items: center; justify-content: space-between; height: 17px; padding-right: 2px; }
.selwrap { display: flex; align-items: center; width: 144px; height: 17px; padding: 0 2px; border: 1px solid #555; background: #404040; }
.selwrap select { flex: 1; appearance: none; font-weight: 500; padding-left: 4px; color: #e8e8e8; }
.metrics { display: grid; grid-template-columns: 85px 85px; justify-content: space-between; row-gap: 4px; padding-top: 1px; }
.metrics .mi { width: 13px; height: 13px; margin-right: 2px; color: #bbb; }
.metrics input { width: 43px; }
.snap { display: flex; align-items: center; height: 19px; gap: 13px; padding-right: 2px; }
.snap span { flex: 1; }
.snaps { display: flex; align-items: center; justify-content: space-between; height: 25px; color: #bbb; }
.snaps button { width: 18px; height: 18px; font: 11px/16px Lato, "Noto Sans CJK JP", sans-serif; border-radius: 2px; display: flex; align-items: center; justify-content: center; }
.snaps .on { background: #292929; color: #fff; }
.snaps b { font-size: 8px; line-height: 10px; font-weight: 500; border: 1px solid; width: 12px; text-align: center; }
.snaps .mid-line { border-width: 1px 0; text-decoration: line-through; }
.snaps .big { font-size: 9px; width: 14px; }
.snaps .vsep { background: #414141; }

.status { flex: none; height: 13px; display: flex; align-items: center; gap: 3px; padding-left: 3px; background: #434343; overflow: hidden; }
.status .field, .status .dd, .status .field input { height: 13px; }
.status .dd { border: 0; }
.status .field input { border: 0; font-size: 9px; }
.z input { flex: 1; }
.z { width: 49px; }
.r { width: 52px; margin-left: 1px; }
.n { width: 42px; }
.toolname { flex: none; width: 150px; text-align: center; }
.status .field + .i10 { margin-left: 2px; }
.hscroll { flex: 1; display: flex; align-items: center; justify-content: space-between; color: #999; padding-right: 9px; background: #404040; }
.hscroll i { width: 18px; height: 9px; border-radius: 5px; background: #5b5b5b; }

.icondock { flex: none; width: 30px; display: flex; flex-direction: column; border: solid #353535; border-width: 0 2px; background: #494949; }
.group { display: flex; flex-direction: column; align-items: center; padding-bottom: 2px; border-bottom: 2px solid #393939; }
.group .grip { margin: 1px auto; }
.group button { display: flex; align-items: center; justify-content: center; width: 21px; height: 17px; margin: 2px 0; color: #ccc; }
.group svg { width: 14px; height: 14px; }
.group .on { background: #2a2a2a; border-radius: 2px; color: #fff; }

.panels { flex: none; width: 200px; display: flex; flex-direction: column; background: #494949; overflow: hidden; }
.panel { flex: none; display: flex; flex-direction: column; border-left: 2px solid #393939; border-bottom: 2px solid #353535; }
.panels .strip { padding-right: 0; margin-right: -3px; }
.actions { height: 144px; }
.docinfo { height: 215px; }
.appear { height: 144px; }
.layers { flex: 1; border-bottom: 0; }
.tabs { flex: none; display: flex; height: 20px; background: #3a3a3a; border-bottom: 1px solid #353535; color: #a6a6a6; font-size: 8px; }
.tabs button { padding: 0 6px; border-right: 1px solid #343434; }
.tabs .on { background: #494949; color: #f0f0f0; font-weight: 700; height: 20px; }
.tabs .cut { width: 12px; padding: 0; overflow: hidden; margin-left: 6px; border: 0; }
.tabs .wide2 { width: 17px; }
.tabs .cut + .on { margin-left: 1px; }
.pmenu { width: 10px; height: 10px; margin: 5px -4px 0 auto; }
.p-body { flex: 1; min-height: 0; display: flex; flex-direction: column; }
.act-wrap { flex: 1; min-height: 0; display: flex; margin: 4px 0 0 4px; border: 1px solid #555; }
.act { flex: 1; min-width: 0; overflow: hidden; }
.act li { display: flex; align-items: center; height: 14px; border-bottom: 1px solid #424242; white-space: nowrap; color: #e0e0e0; }
.act span { flex: none; display: flex; width: 15px; height: 14px; align-items: center; justify-content: center; border-right: 1px solid #424242; }
.act span svg { width: 9px; height: 9px; }
.act .tw { border: 0; width: 18px; }
.act .sub .tw { width: 35px; padding-left: 18px; padding-right: 6px; }
.act .sub .tw svg { width: 10px; height: 10px; }
.folder { width: 11px; height: 9px; margin-right: 3px; }
.pscroll { flex: none; width: 8px; display: flex; flex-direction: column; align-items: center; background: #414141; color: #888; }
.pscroll svg { width: 7px; height: 8px; }
.pscroll i { width: 7px; height: 28px; border-radius: 4px; background: #5b5b5b; margin-bottom: auto; }
.tall i { height: 106px; }
.foot { flex: none; display: flex; align-items: center; gap: 7px; height: 16px; padding: 0 12px 0 6px; }
.foot svg { width: 12px; height: 12px; }
.foot em { font: italic 10px/12px Lato, sans-serif; }
.foot.right { justify-content: flex-end; }
.push { flex: 1; }
.info-row { flex-direction: row; padding: 4px 0 20px 4px; }
.info { flex: 1; min-width: 0; overflow: hidden; line-height: 13px; white-space: nowrap; color: #dcdcdc; }
.gap { margin-bottom: 14px; }
.app { margin: 5px 0 0 4px; border: 1px solid #525252; border-right: 0; flex: 1; }
.app li { display: flex; align-items: center; height: 19px; gap: 6px; border-bottom: 1px solid #565656; white-space: nowrap; }
.app .eye { width: 18px; height: 18px; border-right: 1px solid #565656; display: flex; align-items: center; justify-content: center; flex: none; margin-right: -6px; }
.eye svg { width: 11px; height: 9px; }
.app b { color: #f0f0f0; font-weight: 700; }
.app .head { gap: 20px; }
.thumb { width: 14px; height: 13px; background: #fff; }
.app .i10 { margin-left: 2px; }
.name { width: 44px; }
.chip { width: 12px; height: 12px; background: #fff; border: 2px solid #555; outline: 1px solid #ccc; margin-right: 6px; }
.chip.dark { background: #111; }
.def { margin-left: 14px; }
.lsearch { display: flex; align-items: center; gap: 6px; padding: 7px 0 6px 8px; }
.lsearch label { flex: 1; display: flex; align-items: center; gap: 8px; height: 18px; padding: 0 4px; background: #3b3b3b; border: 1px solid #565656; border-radius: 2px; }
.lsearch input { flex: 1; font-size: 9px; }
.lsearch input::placeholder { color: #ddd; opacity: 1; }
.lrow { display: flex; align-items: center; gap: 4px; height: 16px; margin-left: 4px; background: #46596e; font-size: 9px; color: #eee; }
.lrow .eye { width: 16px; height: 16px; display: flex; align-items: center; justify-content: center; border-right: 1px solid #3a4c60; margin-right: 12px; }
.bar { width: 3px; height: 14px; background: #3a7bff; }
.lthumb { width: 14px; height: 14px; margin-left: 2px; }
.target { margin-left: auto; width: 7px; height: 7px; border: 1px solid #bbb; border-radius: 50%; margin-right: 14px; flex: none; }
.lempty { flex: 1; margin-left: 4px; border: 1px solid #515151; border-right: 0; }
.layers .foot { gap: 7px; padding-left: 4px; height: 17px; }
```
